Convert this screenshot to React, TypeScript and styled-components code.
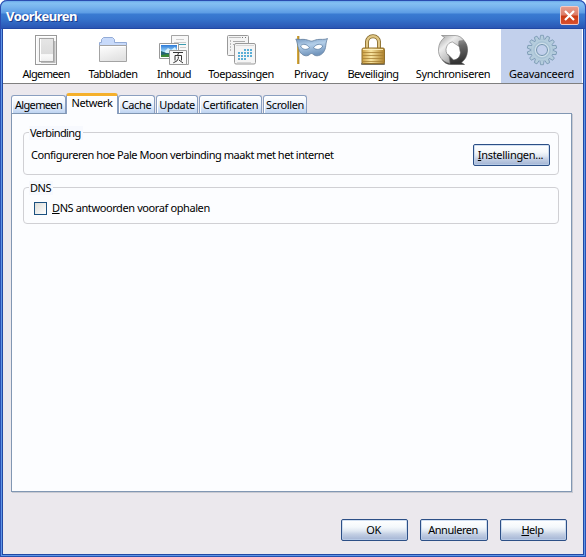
import React from "react";
import styled, { createGlobalStyle } from "styled-components";

const Global = createGlobalStyle`
  html, body { margin: 0; padding: 0; background: #fff; }
  body { font: 11px/14px "Noto Sans", "Liberation Sans", sans-serif; color: #000; }
`;

const Frame = styled.div`
  box-sizing: border-box;
  width: 586px;
  height: 557px;
  display: flex;
  flex-direction: column;
  padding: 0 3px 3px;
  border-radius: 7px 7px 0 0;
  overflow: hidden;
  background: #5f96e6;
  box-shadow: inset 1px 0 #2a50b4, inset -1px 0 #2a50b4, inset 0 -1px #2450b0;
`;

const TitleBar = styled.header`
  flex: none;
  box-sizing: border-box;
  height: 29px;
  margin: 0 -3px;
  padding: 2px 6px 0 7px;
  display: flex;
  align-items: center;
  justify-content: space-between;
  border: 1px solid #2b4cb0;
  border-bottom: 0;
  border-radius: 7px 7px 0 0;
  background: linear-gradient(#6aa9ea 0, #84c0f2 2px, #78b4ee 6px, #5c9ce4 12px, #3a7bd2 13px, #3573cc 18px, #2a56b4 27px, #2448a8 28px);
`;

const Title = styled.h1`
  margin: 0 0 0 -2px;
  font: bold 13px/18px "Noto Sans", sans-serif;
  letter-spacing: -0.55px;
  color: #fff;
  text-shadow: 1px 1px #1b3c8c;
`;

const CloseButton = styled.button`
  width: 19px;
  height: 19px;
  margin-top: -2px;
  padding: 0;
  display: grid;
  place-items: center;
  border: 1px solid #f3c9c4;
  border-radius: 2px;
  background: linear-gradient(#e79c8c 0, #dc7c68 8px, #cc3a14 9px, #d8502e 100%);
`;

const Client = styled.div`
  flex: 1;
  display: flex;
  flex-direction: column;
  background: #ebe8ed;
  box-shadow: 0 0 0 1px #2148a4;
`;

const Toolbar = styled.nav`
  flex: none;
  display: flex;
  height: 54px;
  padding-left: 10px;
  background: #fff;
  border-bottom: 1px solid #7f7f7f;
`;

const Category = styled.div<{ $w: number; $active?: boolean }>`
  box-sizing: border-box;
  width: ${(p) => p.$w}px;
  padding-top: 5px;
  display: flex;
  flex-direction: column;
  align-items: center;
  background: ${(p) => (p.$active ? "#c2d0ec" : "transparent")};
`;

const Text = styled.span<{ $ls?: number }>`
  white-space: nowrap;
  letter-spacing: ${(p) => p.$ls ?? -0.45}px;
  u { text-decoration: underline; text-underline-offset: 1px; text-decoration-thickness: 1px; }
`;

const IconSlot = styled.div`
  width: 32px;
  height: 32px;
  margin-bottom: 1px;
  svg { display: block; }
`;

const TabStrip = styled.div`
  flex: none;
  display: flex;
  align-items: flex-end;
  height: 20px;
  margin: 9px 0 0 8px;
`;

const Tab = styled.div<{ $w: number; $gap?: number; $selected?: boolean }>`
  box-sizing: border-box;
  position: relative;
  z-index: ${(p) => (p.$selected ? 1 : 0)};
  width: ${(p) => p.$w}px;
  height: ${(p) => (p.$selected ? 21 : 18)}px;
  margin: 0 0 ${(p) => (p.$selected ? -1 : 0)}px ${(p) => p.$gap ?? 0}px;
  padding-bottom: ${(p) => (p.$selected ? 4 : 0)}px;
  display: flex;
  align-items: center;
  justify-content: center;
  border: 1px solid #8a9fc0;
  border-top: ${(p) => (p.$selected ? "3px solid #f5b02c" : "1px solid #8a9fc0")};
  border-bottom: 0;
  border-radius: 3px 3px 0 0;
  background: ${(p) => (p.$selected ? "#fcfdff" : "linear-gradient(#fff 0, #edf3fc 8px, #b9d0f0 18px)")};
  box-shadow: inset 1px 1px #fff;
`;

const Panel = styled.main`
  box-sizing: border-box;
  width: 561px;
  height: 379px;
  margin-left: 8px;
  padding: 18px 12px 0 11px;
  background: #fcfdff;
  border: 1px solid #8197b3;
  box-shadow: 1px 1px #c8cad2;
`;

const Group = styled.section<{ $h: number }>`
  box-sizing: border-box;
  height: ${(p) => p.$h}px;
  margin-bottom: 12px;
  border: 1px solid #d0d0d4;
  border-radius: 4px;
`;

const Legend = styled.h2`
  width: fit-content;
  height: 14px;
  margin: -7px 0 0 5px;
  padding: 0 2px 0 1px;
  font: inherit;
  background: #f7f9fe;
`;

const GroupRow = styled.div`
  display: flex;
  align-items: center;
  justify-content: space-between;
  height: 22px;
  margin: 4px 8px 0 7px;
`;

const CheckRow = styled.label`
  display: flex;
  align-items: center;
  gap: 5px;
  height: 14px;
  margin: 6px 0 0 10px;
`;

const CheckBox = styled.span`
  box-sizing: border-box;
  width: 13px;
  height: 13px;
  border: 1px solid #1c5180;
  background: linear-gradient(135deg, #dcdcd7, #fff);
`;

const Button = styled.button<{ $w: number }>`
  box-sizing: border-box;
  width: ${(p) => p.$w}px;
  height: 22px;
  padding: 0 2px 1px 0;
  font: inherit;
  color: #000;
  border: 1px solid #2c4f86;
  border-radius: 2px;
  background: linear-gradient(#fff 0, #f4f8fb 7px, #dfe7f1 11px, #c4d0e4 14px, #a3b4d4 20px);
  box-shadow: inset 0 0 0 1px rgba(190, 210, 235, 0.7);
`;

const Actions = styled.footer`
  display: flex;
  gap: 12px;
  justify-content: flex-end;
  margin: 27px 16px 0 0;
`;

const SwitchIcon = () => (
  <svg width="32" height="32" viewBox="0 0 32 32">
    <defs>
      <linearGradient id="sw" x2="0" y2="1"><stop stopColor="#e6e6e6" /><stop offset=".66" stopColor="#dcdcdc" /><stop offset=".7" stopColor="#fafafa" /><stop offset="1" stopColor="#eee" /></linearGradient>
    </defs>
    <rect x="5.500" y="1.500" width="21" height="29" fill="#f7f7f7" stroke="#999" />
    <path d="M6.500 2.500v27M6 2.500h20" stroke="#fff" />
    <path d="M11 28h13.500V7" fill="none" stroke="#bbb" strokeWidth="2" />
    <rect x="9.500" y="4.500" width="14" height="23" fill="url(#sw)" stroke="#a5a5a5" />
    <path d="M10.500 5v22" stroke="#fff" />
  </svg>
);

const TabsIcon = () => (
  <svg width="32" height="32" viewBox="0 0 32 32">
    <defs><linearGradient id="tb" x2=".5" y2="1"><stop stopColor="#fff" /><stop offset="1" stopColor="#e2e2e2" /></linearGradient></defs>
    <path d="M2.500 11.500V8.500h2v-3l2-2h9l2 2v3h12v3z" fill="#c8dafa" stroke="#93abd6" />
    <path d="M2.500 11.500h27v16h-27z" fill="url(#tb)" stroke="#a3a3a3" />
    <path d="M3.500 12.500h25" stroke="#fff" />
  </svg>
);

const ContentIcon = () => (
  <svg width="32" height="32" viewBox="0 0 32 32">
    <defs><linearGradient id="sky" x2="0" y2="1"><stop stopColor="#2b79d8" /><stop offset=".6" stopColor="#aee2fa" /><stop offset=".7" stopColor="#27728c" /><stop offset="1" stopColor="#194b50" /></linearGradient></defs>
    <path d="M13.500 1.500h17v29h-17z" fill="#f8f8f8" stroke="#a5a5a5" />
    <path d="M18 5.500h8M16 8.500h12M22 13.500h6" stroke="#ccc" /><path d="M19 10.500h9" stroke="#389bb0" />
    <path d="M1.500 9.500h19v15h-19z" fill="#fff" stroke="#999" />
    <path d="M3 11h16v12H3z" fill="url(#sky)" />
    <path d="M7 17l3-3 3 2 4-3 2 4v2H7z" fill="#d8f1fb" /><path d="M3 17l8 3 8-1v4H3z" fill="#246274" /><path d="M3 21l7-1 5 3H3z" fill="#3b8736" />
    <path d="M11.500 16.500h17v14h-17z" fill="#fafafa" stroke="#999" />
    <path d="M15 18.500h10M20.500 19l-1 2.500M17 26.500v-5h6.500v5M20.300 22.500v2q-.3 2.800-5 4.300M21 26l4 3" fill="none" stroke="#333" />
  </svg>
);

const AppsIcon = () => (
  <svg width="32" height="32" viewBox="0 0 32 32">
    <rect x="2.500" y="1.500" width="21" height="20" rx="1" fill="#f4f4f4" stroke="#999" />
    <path d="M4 3.500h12" stroke="#bbb" /><path d="M17 3.500h1M20 3.500h1" stroke="#777" />
    <path d="M5.500 6v11" stroke="#bbb" strokeDasharray="2 1" /><path d="M8 7.500h12M8 10.500h1" stroke="#aaa" />
    <rect x="9.500" y="9.500" width="21" height="20.500" rx="1.500" fill="#f5f5f5" stroke="#999" />
    <path d="M11 11.500h18M12 28.500h14" stroke="#d6d6d6" />
    <path d="M19 16h9M13 19h15M13 22h15M13 25h9" stroke="#5aaed6" strokeWidth="2" strokeDasharray="2 1" />
  </svg>
);

const MaskIcon = () => (
  <svg width="34" height="32" viewBox="0 0 34 32">
    <defs><linearGradient id="mk" x2=".3" y2="1"><stop stopColor="#7397c0" /><stop offset=".45" stopColor="#b4cfe9" /><stop offset="1" stopColor="#7396bd" /></linearGradient></defs>
    <path d="M3 2v28" stroke="#d3a63a" strokeWidth="2" /><path d="M4 2v28" stroke="#8a6515" strokeWidth=".6" />
    <path d="M.8 5c1.500 2.500 1.500 6 2.700 9.500 1.500 5 4.500 7.300 8 7.300 2.800 0 3.400-2.300 5-2.300s2.600 2.500 5.500 2.300c4.500-.3 7.500-3.500 8.500-8.300.5-3 .5-6 2-9-3 1.500-6.500 .5-10 1-2.500.3-4 1.600-6 1.600s-3.500-1.200-6-1.600C7 5 4 6 .8 5z" fill="url(#mk)" stroke="#64809f" strokeWidth=".8" />
    <path d="M5.500 12c2.500-2.800 6.500-2 9 1.800-3 2.600-7 2-9-1.800zM18.500 13.800c2.500-3.800 6.500-4.600 9.300-1.800-2 3.800-6.300 4.400-9.300 1.800z" fill="#fff" stroke="#5b7da3" strokeWidth=".8" />
  </svg>
);

const LockIcon = () => (
  <svg width="32" height="32" viewBox="0 0 32 32">
    <defs><linearGradient id="lk"><stop stopColor="#c99c3f" /><stop offset=".4" stopColor="#f9e5a1" /><stop offset="1" stopColor="#ad7f29" /></linearGradient></defs>
    <path d="M10 16V8a6 5.800 0 0 1 12 0V16" fill="none" stroke="#806426" strokeWidth="4" />
    <path d="M10 16V8a6 5.800 0 0 1 12 0V16" fill="none" stroke="#dfc684" strokeWidth="2.400" />
    <rect x="4" y="28.500" width="24" height="2.500" rx="1" fill="#7b7565" />
    <rect x="5" y="14" width="22.500" height="15.500" rx="1.500" fill="url(#lk)" stroke="#91702d" />
    <path d="M5.500 18.500h21M5.500 21.500h21M5.500 24.500h21M5.500 27.500h21" stroke="#a78035" strokeWidth=".8" /><path d="M6 15.500h20" stroke="#fbedba" />
  </svg>
);

const SyncIcon = () => (
  <svg width="32" height="32" viewBox="0 0 32 32">
    <defs>
      <linearGradient id="sy1" x2=".8" y2="1"><stop stopColor="#999" /><stop offset=".35" stopColor="#ececec" /><stop offset=".65" stopColor="#c0c0c0" /><stop offset="1" stopColor="#777" /></linearGradient>
      <linearGradient id="sy2" x2=".2" y2="1"><stop stopColor="#c4c4c4" /><stop offset=".45" stopColor="#6c6c6c" /><stop offset="1" stopColor="#333" /></linearGradient>
    </defs>
    <path d="M19 2.500C27 4 31 10 30.500 17c-.3 5-2.500 9-6 11.500l3 2H14c-4 0-7-2-9-5l5-.5.500-5 6 6c4-.5 6.500-3 7-7.500l-2-8z" fill="url(#sy2)" stroke="#555" strokeWidth=".6" />
    <path d="M13 29.500C5 28 1 22 1.500 15c.3-5 2.500-9 6-11.500l-3-2H18c4 0 7 2 9 5l-5 .5-.5 5-6-4c-4 .5-6 3.500-6.500 7.500 0 3 1 5 3 6.500z" fill="url(#sy1)" stroke="#777" strokeWidth=".6" />
    <path d="M10.500 16c0-3 2-6 5-6.500l.5 2.500h3l1 2 2-1.500c1 4-1 8-4.500 9.500l-1.500-2-2 .5-1-2z" fill="#fff" />
  </svg>
);

const teeth = Array.from({ length: 14 }, (_, i) => (i * 360) / 14);
const GearIcon = () => (
  <svg width="32" height="32" viewBox="0 0 32 32">
    {teeth.map((a) => (
      <path key={a} d="M13.800 6l.8-4.700h2.800L18.200 6z" transform={`rotate(${a} 16 16)`} fill="#b5cddd" stroke="#7797b0" strokeWidth=".8" />
    ))}
    <circle cx="16" cy="16" r="10.800" fill="#b5cddd" />
    <circle cx="16" cy="16" r="8.200" fill="none" stroke="#a4c0d3" />
    <circle cx="16" cy="16" r="5.500" fill="#c2d0ec" stroke="#7595ae" strokeWidth="1" />
    <circle cx="16" cy="16" r="6.600" fill="none" stroke="#d2e1eb" />
  </svg>
);

const categories = [
  { label: "Algemeen", w: 66, ls: -0.65, icon: <SwitchIcon /> },
  { label: "Tabbladen", w: 68, ls: -0.5, icon: <TabsIcon /> },
  { label: "Inhoud", w: 54, ls: -0.6, icon: <ContentIcon /> },
  { label: "Toepassingen", w: 80, ls: -0.45, icon: <AppsIcon /> },
  { label: "Privacy", w: 60, ls: -0.35, icon: <MaskIcon /> },
  { label: "Beveiliging", w: 64, ls: -0.5, icon: <LockIcon /> },
  { label: "Synchroniseren", w: 96, ls: -0.4, icon: <SyncIcon /> },
  { label: "Geavanceerd", w: 81, ls: -0.25, icon: <GearIcon />, active: true },
];

const tabs = [
  { label: "Algemeen", w: 55, ls: -0.65 },
  { label: "Netwerk", w: 52, ls: -0.4, selected: true },
  { label: "Cache", w: 37, ls: -0.35 },
  { label: "Update", w: 42, gap: 1, ls: -0.4 },
  { label: "Certificaten", w: 63, gap: 1, ls: -0.35 },
  { label: "Scrollen", w: 44, gap: 1, ls: -0.4 },
];

export default function App() {
  return (
    <>
      <Global />
      <Frame>
        <TitleBar>
          <Title>Voorkeuren</Title>
          <CloseButton aria-label="Sluiten">
            <svg width="13" height="13" viewBox="0 0 13 13"><path d="M2 2l9 9M11 2l-9 9" stroke="#fff" strokeWidth="2.200" /></svg>
          </CloseButton>
        </TitleBar>
        <Client>
          <Toolbar>
            {categories.map((c) => (
              <Category key={c.label} $w={c.w} $active={c.active}>
                <IconSlot>{c.icon}</IconSlot>
                <Text $ls={c.ls}>{c.label}</Text>
              </Category>
            ))}
          </Toolbar>
          <TabStrip>
            {tabs.map((t) => (
              <Tab key={t.label} $w={t.w} $gap={t.gap} $selected={t.selected}>
                <Text $ls={t.ls}>{t.label}</Text>
              </Tab>
            ))}
          </TabStrip>
          <Panel>
            <Group $h={43}>
              <Legend><Text $ls={-0.6}>Verbinding</Text></Legend>
              <GroupRow>
                <Text $ls={-0.46}>Configureren hoe Pale Moon verbinding maakt met het internet</Text>
                <Button $w={77}><Text $ls={-0.3}><u>I</u>nstellingen...</Text></Button>
              </GroupRow>
            </Group>
            <Group $h={37}>
              <Legend><Text>DNS</Text></Legend>
              <CheckRow>
                <CheckBox />
                <Text $ls={-0.4}><u>D</u>NS antwoorden vooraf ophalen</Text>
              </CheckRow>
            </Group>
          </Panel>
          <Actions>
            <Button $w={67}><Text>OK</Text></Button>
            <Button $w={68}><Text>Annuleren</Text></Button>
            <Button $w={67}><Text><u>H</u>elp</Text></Button>
          </Actions>
        </Client>
      </Frame>
    </>
  );
}
